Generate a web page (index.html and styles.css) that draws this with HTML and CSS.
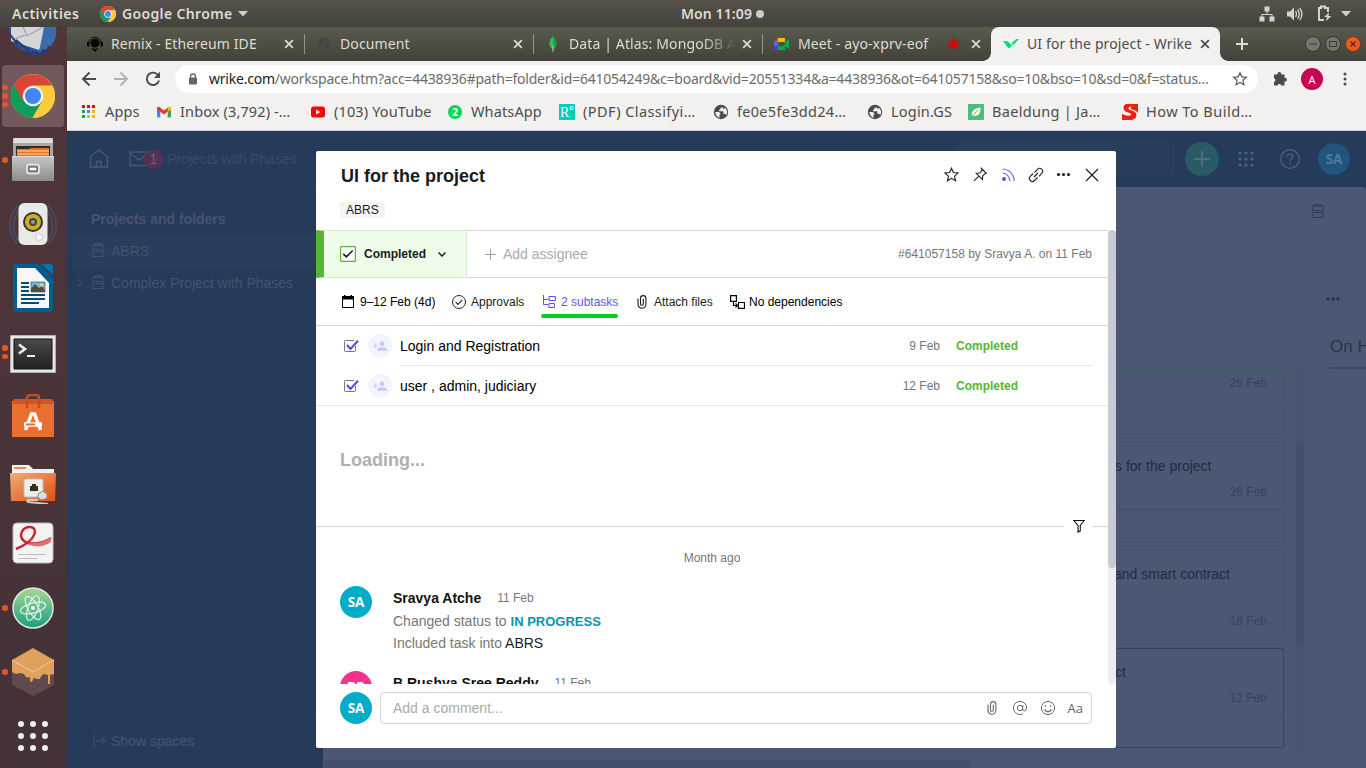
FILE: index.html
```html
<!DOCTYPE html>
<html lang="en">
<head>
<meta charset="utf-8">
<title>UI for the project - Wrike</title>
<link rel="stylesheet" href="styles.css">
</head>
<body>
<svg class="defs" width="0" height="0">
  <symbol id="chrome" viewBox="0 0 44 44">
    <circle cx="22" cy="22" r="22" fill="#fcca3f"/>
    <path d="M22 22 2.900 11A22 22 0 0 0 21.500 44L31.500 27.500z" fill="#109d58"/>
    <path d="M2.900 11A22 22 0 0 1 41 11.500H22L12.500 27.500z" fill="#db4437"/>
    <path d="M22 12h19.600A22 22 0 0 1 21.500 44L31 27z" fill="#fcca3f"/>
    <circle cx="22" cy="22" r="10.300" fill="#f1f1f1"/><circle cx="22" cy="22" r="8" fill="#4285f4"/>
  </symbol>
  <symbol id="close" viewBox="0 0 10 10"><path d="M1.800 1.800l6.400 6.400m0-6.400l-6.400 6.400" fill="none" stroke="currentColor" stroke-width="1.500"/></symbol>
  <symbol id="globe" viewBox="0 0 16 16"><circle cx="8" cy="8" r="7.200" fill="#4a4a4a"/><path d="M2.200 8h3.300q2 .3 2 2.500H6.500v3.200Q3 12.500 2.200 8zM9.500 2.300v1.500H7.300v2H6v1.500h4.300v2.500h1.700l1.300 1.200Q15.200 8 13 5l-1.500-1.700v1.400h-1.300z" fill="#f2f1f0"/></symbol>
  <symbol id="clipboard" viewBox="0 0 12 14"><path d="M3.500 1.500H1v12h10v-12H8.500M3.500.500h5v2h-5zM2.500 6.500h7M2.500 8.500h7" fill="none" stroke="currentColor"/></symbol>
  <symbol id="clip" viewBox="0 0 10 14"><path d="M1 3.500v5.800a3.900 3.900 0 0 0 7.900 0V3.300a2.700 2.700 0 0 0-5.400 0v5.600a1.400 1.400 0 0 0 2.800 0V3.700" fill="none" stroke="currentColor" stroke-width="1.100"/></symbol>
  <symbol id="check" viewBox="0 0 16 14"><path d="M12.500 7v4.700q0 .8-.8.800H2.300q-.8 0-.8-.8V2.300q0-.8.8-.8H11" fill="none" stroke="#777" /><path d="M4 6l3.500 3.900L15 1.800" fill="none" stroke="#5a4ff3" stroke-width="2.200"/></symbol>
  <symbol id="person" viewBox="0 0 24 24"><circle cx="12" cy="12" r="12" fill="#f2f4ff"/><g fill="#c3c8fa"><circle cx="14" cy="9.700" r="2.300"/><path d="M9 16.700q0-3.500 5-3.500t5 3.500zM5 11.200h2v-2h1v2h2v1H8v2H7v-2H5z"/></g></symbol>
</svg>

<div class="desktop">
  <header class="topbar">
    <span class="activities">Activities</span>
    <svg class="mini-chrome" width="16" height="16"><use href="#chrome"/></svg>
    <span class="appname">Google Chrome</span>
    <svg width="10" height="6"><path d="M0 0h10L5 5.500z" fill="#d2d0ca"/></svg>
    <div class="clock"><span>Mon 11:09</span><i></i></div>
    <div class="tray">
      <svg width="16" height="16" fill="#d5d3ce"><path d="M5.500 0.500h5v5h-5zM0.500 10.500h5v5h-5zM10.500 10.500h5v5h-5zM7.500 5h1v3h5v3h-1V9h-9v2h-1V8h5z"/></svg>
      <svg width="17" height="16"><path d="M1 5.500h3l4-4v13l-4-4H1z" fill="#d5d3ce"/><path d="M9.500 5.200q2 2.800 0 5.600M11.600 3.300q3.300 4.700 0 9.400M13.700 1.800q4.400 6.200 0 12.400" fill="none" stroke="#d5d3ce" stroke-width="1.300"/></svg>
      <svg width="16" height="17"><path d="M8 15H3V3h2V1.500h4V3h3v4" fill="none" stroke="#d5d3ce" stroke-width="2"/><path d="M13 7.500 8 12h3l-1 4 5.500-5h-3z" fill="#d5d3ce"/></svg>
      <svg width="10" height="6"><path d="M0 0h10L5 5.500z" fill="#d2d0ca"/></svg>
    </div>
  </header>

  <div class="below">
    <aside class="dock">
      <div class="dock-item first">
        <svg width="50" height="30"><path d="M0 0h48q2 16-12 25l-10 3-8-3Q1 18 0 0z" fill="#2d4e90"/><path d="M33 0h15q2 14-9 22l-8 3z" fill="#3a6cac"/><path d="M3 0h33l-4 20-1 3L3 14z" fill="#d6d5d8"/><path d="M15 0l4 9L35 0M17 8L4 13" fill="none" stroke="#96949a"/><path d="M1 6l9 12-2-5 12 10 1 5 4-3 8 3 2-5 4 1 2-5" fill="none" stroke="#233a78" stroke-width="2"/></svg>
      </div>
      <div class="dock-item active"><svg width="44" height="44"><use href="#chrome"/></svg><span class="pips"><i></i><i></i><i></i></span></div>
      <div class="dock-item">
        <svg width="42" height="44"><defs><linearGradient id="gm" x2="0" y2="1"><stop stop-color="#c6c6c4"/><stop offset="1" stop-color="#8c8c8a"/></linearGradient></defs><path d="M1 0h40v43H1z" fill="#a8a8a6"/><path d="M2 0h38l1 5H1z" fill="#dededc"/><path d="M4 8h34v11H4z" fill="#332b24"/><path d="M5 11h12l2-1h18v9H5z" fill="#e77425"/><path d="M5 13h32M5 16h32" stroke="#fbd9a4"/><path d="M0 18h42v25H0z" fill="url(#gm)"/><path d="M0 18.500h42" stroke="#ddd"/><rect x="15" y="26.500" width="12" height="9" rx="2" fill="#999" stroke="#e0e0e0" stroke-width="2"/><path d="M17 29h8v4h-8z" fill="#fff" stroke="#444"/></svg><span class="pips"><i></i></span>
      </div>
      <div class="dock-item">
        <svg width="50" height="46"><path d="M10 4Q-6 24 9 43M14 5Q-2 24 12 42M40 4Q56 24 41 43M36 5Q52 24 38 42" fill="none" stroke="#4a4a66" stroke-width="1.800"/><rect x="10.500" y="2" width="29" height="42" rx="6" fill="#e9e9e7"/><circle cx="25" cy="21" r="10" fill="#333"/><circle cx="25" cy="21" r="8" fill="#ceaf22"/><circle cx="25" cy="21" r="4" fill="#464642"/><circle cx="25" cy="21" r="2" fill="#999"/><circle cx="31" cy="36" r="3.500" fill="#f8f8f8" stroke="#ccc"/></svg>
      </div>
      <div class="dock-item">
        <svg width="42" height="50"><path d="M3 1h24l14 14v31q0 3-3 3H4q-3 0-3-3V4q0-3 2-3z" fill="#005d91"/><path d="M29 1h9q3 0 3 3v8z" fill="#0071ad"/><path d="M5 5h18l14 15v25H5z" fill="#f8f8f8"/><path d="M9 20h8M9 24h8M9 28h8M9 32h24M9 36h24M9 40h18" stroke="#004c7d" stroke-width="2"/><path d="M19 19h14v10H19z" fill="#75b8e6" stroke="#245" stroke-width=".6"/><path d="M19 29v-3l4-5 4 4 3-2 3 5v1z" fill="#554d3a"/><circle cx="29.500" cy="22" r="1.500" fill="#fde255"/></svg>
      </div>
      <div class="dock-item term">
        <svg width="46" height="38"><defs><linearGradient id="tm" x2="0" y2="1"><stop stop-color="#484b48"/><stop offset="1" stop-color="#222321"/></linearGradient></defs><path d="M.500.500h45v37H.500z" fill="#e6e6e5" stroke="#b0b0b0"/><path d="M4 4h38v30H4z" fill="url(#tm)" stroke="#111"/><path d="M9 9.500l6 4.500-6 4.500" fill="none" stroke="#eee" stroke-width="2.600"/><path d="M17 21h8" stroke="#eee" stroke-width="2"/></svg><span class="pips"><i></i><i></i></span>
      </div>
      <div class="dock-item">
        <svg width="42" height="44"><path d="M0 7h42v36H0z" fill="#e96f31"/><path d="M2 5h38l2 5H0z" fill="#cf5526"/><path d="M15 14V3l2-2h8l2 2v11" fill="none" stroke="#c44e22" stroke-width="2.500"/><path d="M13.500 36l6-16h3l6 16" fill="none" stroke="#fff" stroke-width="3.500"/><path d="M12 30.500h18" stroke="#fff" stroke-width="4.500"/><path d="M14 30.500h9" stroke="#e96f31" stroke-width="2"/></svg>
      </div>
      <div class="dock-item folder">
        <svg width="46" height="40"><defs><linearGradient id="fd" x2="1" y2="1"><stop stop-color="#efae73"/><stop offset="1" stop-color="#e04e18"/></linearGradient></defs><path d="M2 1h17l4 4h21v12H2z" fill="#f2efec"/><path d="M4 3h12v2H4z" fill="#e58c54"/><path d="M0 9h46l-1 28H1z" fill="url(#fd)"/><rect x="14" y="15" width="19" height="18" rx="2" fill="#ededeb" stroke="#bdbdbb"/><path d="M20 22h2v-2h4v2h2v5h-8z" fill="#32301d"/><path d="M28 30l5-3 4 3v4l-5 2-4-2z" fill="#ddd" stroke="#888"/><path d="M28 36q-14-1-10 2 10 1 20 2" fill="none" stroke="#ccc" stroke-width="2"/></svg>
      </div>
      <div class="dock-item docv">
        <svg width="42" height="42"><rect x="1" y="1" width="40" height="40" rx="4" fill="#f3f3f3" stroke="#bbb"/><path d="M4 27C26 18 26 5 18 5S6 14 12 19s20 2 27-3" fill="none" stroke="#c22b32" stroke-width="2.500"/><path d="M17 21q13 1 22-6v5q-10 7-22 3z" fill="#dd7275"/><path d="M6 32.500h28M6 36.500h19" stroke="#bcbcbc"/></svg>
      </div>
      <div class="dock-item">
        <svg width="42" height="42"><defs><linearGradient id="at" x2="0" y2="1"><stop stop-color="#a8d794"/><stop offset="1" stop-color="#18a080"/></linearGradient></defs><circle cx="21" cy="21" r="20" fill="url(#at)" stroke="#e2e8e2" stroke-width="1.500"/><g fill="none" stroke="#e5f3e7" stroke-width="1.200"><ellipse cx="21" cy="21" rx="13" ry="5" transform="rotate(-15 21 21)"/><ellipse cx="21" cy="21" rx="13" ry="5" transform="rotate(60 21 21)"/><ellipse cx="21" cy="21" rx="13" ry="5" transform="rotate(110 21 21)"/></g><circle cx="21" cy="21" r="2" fill="#fff"/></svg><span class="pips"><i></i></span>
      </div>
      <div class="dock-item">
        <svg width="42" height="48"><path d="M0 12v25l21 11 21-11V12z" fill="#614a4e"/><path d="M21 0l21 12v14l-4 1v9h-2v-9l-4-1q-3 1-4 5l-4 0q-1-2-3 0 0 3-3 3v-5q-4 2-6-3l-4-1-4 1-4-2V12z" fill="#dfa15c"/><path d="M0 12l21 12 21-12" fill="none" stroke="#f5ead7" stroke-dasharray="1.500 1"/></svg><span class="pips"><i></i></span>
      </div>
      <div class="dock-item apps"><i></i><i></i><i></i><i></i><i></i><i></i><i></i><i></i><i></i></div>
    </aside>

    <section class="browser">
      <div class="tabs">
        <div class="tab"><svg width="16" height="16"><circle cx="8" cy="7" r="4.600" fill="#080808"/><path d="M1.700 7.500a6.300 6.300 0 0 1 12.600 0" fill="none" stroke="#080808"/><path d="M0 6h2.500v4.500H1L0 9.500zM13.500 6H16v3.500l-1 1h-1.500zM4 12l4 1 4-1-4 4z" fill="#080808"/></svg><span class="tt t1">Remix - Ethereum IDE</span><svg class="x" width="12" height="12"><use href="#close"/></svg></div>
        <div class="tab"><svg width="16" height="16"><circle cx="8" cy="8" r="6.500" fill="#484a46"/><path d="M3 5l4-2 1 4-3 3zM9 6l4 2-3 5z" fill="#42443f"/></svg><span class="tt t2">Document</span><svg class="x" width="12" height="12"><use href="#close"/></svg></div>
        <div class="tab"><svg width="16" height="16"><path d="M8 0q7 8 0 14Q1 8 8 0z" fill="#13aa52"/><path d="M8 0q-7 8 0 14z" fill="#3bbb55"/><path d="M8 9v7" stroke="#a8c09a"/></svg><span class="tt t3 fade">Data | Atlas: MongoDB A</span><svg class="x" width="12" height="12"><use href="#close"/></svg></div>
        <div class="tab"><svg width="16" height="16"><path d="M0 6l4-4v4z" fill="#ea4335"/><path d="M4 2h7v4H4z" fill="#ffba00"/><path d="M0 6h4v4H0z" fill="#3077fc"/><path d="M0 10h4v4H1l-1-1z" fill="#5238e8"/><path d="M4 10h5l2-2V6l4-3v10l-4-3v4H4z" fill="#00ac47"/></svg><span class="tt t4">Meet - ayo-xprv-eof</span><svg class="rec" width="14" height="14"><circle cx="7" cy="7" r="3.800" fill="#e00000"/><circle cx="7" cy="7" r="5.600" fill="none" stroke="#c80000" stroke-dasharray="1.600 1"/></svg><svg class="x" width="12" height="12"><use href="#close"/></svg></div>
        <div class="tab on"><svg width="16" height="16"><path d="M0 5h3q1.500 0 2.500 1L9 9.500 6.500 12q-.8.600-1.600-.2zM8.500 7.500L12 4q1-1 2-1h2l-5 5.500q-1 .8-1.800 0z" fill="#00e070"/></svg><span class="tt t5">UI for the project - Wrike</span><svg class="x" width="12" height="12"><use href="#close"/></svg></div>
        <svg class="plus" width="14" height="14"><path d="M7 1v12M1 7h12" stroke="#dfdbd2" stroke-width="2"/></svg>
        <div class="win"><svg width="16" height="16"><circle cx="8" cy="8" r="7.500" fill="#77766e" stroke="#35352f"/><path d="M4 8h8" stroke="#3a3935"/></svg><svg width="16" height="16"><circle cx="8" cy="8" r="7.500" fill="#77766e" stroke="#35352f"/><path d="M4.500 5.500h7v5h-7z" fill="none" stroke="#3a3935"/></svg><svg width="16" height="16"><circle cx="8" cy="8" r="7.500" fill="#ed5a1f" stroke="#7a3217"/><path d="M5.500 5.500l5 5m0-5l-5 5" stroke="#51260f" stroke-width="1.200"/></svg></div>
      </div>
      <div class="toolbar">
        <div class="nav">
          <svg width="16" height="16"><path d="M15 8H2M8.500 1.500L2 8l6.500 6.500" fill="none" stroke="#4a4a48" stroke-width="1.900"/></svg>
          <svg width="16" height="16"><path d="M1 8h13M7.500 1.500L14 8l-6.500 6.500" fill="none" stroke="#b1b0ae" stroke-width="1.900"/></svg>
          <svg width="16" height="16"><path d="M13.300 4.500A6.200 6.200 0 1 0 14 9.500" fill="none" stroke="#4a4a48" stroke-width="1.900"/><path d="M15 .800V7H9z" fill="#4a4a48"/></svg>
        </div>
        <div class="omni">
          <svg width="10" height="12"><path d="M1.500 5h7v6h-7z" fill="#666" stroke="#666"/><path d="M2.500 5V3.500a2.500 2.500 0 0 1 5 0V5" fill="none" stroke="#666" stroke-width="1.300"/></svg>
          <span class="url"><b>wrike.com</b>/workspace.htm?acc=4438936#path=folder&amp;id=641054249&amp;c=board&amp;vid=20551334&amp;a=4438936&amp;ot=641057158&amp;so=10&amp;bso=10&amp;sd=0&amp;f=status…</span>
          <svg width="16" height="16"><path d="M8 1.800l1.900 4 4.400.500-3.300 3 .900 4.400L8 11.500l-3.900 2.200.9-4.400-3.300-3 4.400-.5z" fill="none" stroke="#5d5d5b" stroke-width="1.300"/></svg>
        </div>
        <svg class="puzzle" width="16" height="16"><path d="M2 3.500h3.600a1.900 1.900 0 1 1 3.600 0H12.500v3.300a1.900 1.900 0 1 1 0 3.700V14.500H9.200a1.900 1.900 0 0 0-3.700 0H2v-3.600a1.900 1.900 0 0 0 0-3.700z" fill="#4a4a48"/></svg>
        <span class="me">A</span>
        <svg class="kebab" width="4" height="14"><g fill="#4a4a48"><circle cx="2" cy="2" r="1.500"/><circle cx="2" cy="7" r="1.500"/><circle cx="2" cy="12" r="1.500"/></g></svg>
      </div>
      <div class="marks">
        <div class="mk w1"><svg width="16" height="16"><path d="M1 1h3v3H1zM6 1h3v3H6zM11 1h3v3h-3z" fill="#e00d0d"/><path d="M1 6h3v3H1zM1 11h3v3H1z" fill="#17a05d"/><path d="M6 6h3v3H6z" fill="#4285f4"/><path d="M11 6h3v3h-3zM6 11h3v3H6zM11 11h3v3h-3z" fill="#f7b50a"/></svg><span>Apps</span></div>
        <div class="mk w2"><svg width="16" height="16"><path d="M1 4h3.300v9.500H2l-1-1z" fill="#4285f4"/><path d="M11.700 4H15v8.500l-1 1h-2.300z" fill="#34a853"/><path d="M1 4.500Q1 2 3.500 3L8 6.500 12.500 3v4L8 10.500 1 5.500z" fill="#e43a30"/><path d="M11.700 3.500Q15 1.500 15 4.500v1l-3.300 2.500z" fill="#fbbc04"/></svg><span>Inbox (3,792) -…</span></div>
        <div class="mk w3"><svg width="16" height="16"><rect x="1" y="2.500" width="14" height="11" rx="2.500" fill="#f00"/><path d="M6 5.500v5L10.500 8z" fill="#fff"/></svg><span>(103) YouTube</span></div>
        <div class="mk w4"><span class="wa">2</span><span>WhatsApp</span></div>
        <div class="mk w5"><span class="rg">R<sup>G</sup></span><span>(PDF) Classifyi…</span></div>
        <div class="mk w6"><svg width="16" height="16"><use href="#globe"/></svg><span>fe0e5fe3dd24…</span></div>
        <div class="mk w7"><svg width="16" height="16"><use href="#globe"/></svg><span>Login.GS</span></div>
        <div class="mk w8"><svg width="16" height="16"><path d="M0 0h16v16H0z" fill="#4cbf74"/><path d="M4 12Q2.500 4.500 12.500 3.500 13 12 6 12z" fill="#fff"/><path d="M3.500 13L10 6" stroke="#4cbf74"/></svg><span>Baeldung | Ja…</span></div>
        <div class="mk w9"><svg width="16" height="16"><path d="M0 0h16v16H0z" fill="#fff"/><path d="M4 0h12v4Q10 1.500 8.500 3.500q-.5 1.500 3 2.500 4.500 1.500 4.500 4V0H4Q1 1.500 1.500 4.500 2 7.500 6 8.500q4 1 3 2.500Q7 13 0 10v6h10q5-1.500 4.500-5.500Q14 7.500 10 6.500 6 5.500 6.500 4 7 1.500 16 4V0z" fill="#ee2211"/></svg><span>How To Build…</span></div>
      </div>

      <main class="page">
        <div class="app-head">
          <svg class="home" width="20" height="20"><path d="M1.500 18V7.500L10 1l8.500 6.500V18zM7.500 18v-5.500h4.500V18" fill="none" stroke="currentColor" stroke-width="1.400"/></svg>
          <svg width="20" height="16"><path d="M1 1h18v13.500H1zM1 2l9 7 9-7" fill="none" stroke="currentColor" stroke-width="1.400"/></svg>
          <span class="count">1</span>
          <span class="crumb">Projects with Phases</span>
          <svg class="crumb-next" width="6" height="10"><path d="M1 1l4 4-4 4" fill="none" stroke="currentColor"/></svg>
          <div class="search"></div>
          <span class="add"><svg width="16" height="16"><path d="M8 0v16M0 8h16" stroke="#506a80" stroke-width="2"/></svg></span>
          <span class="ring"><svg width="16" height="16" fill="#506080"><circle cx="2" cy="2" r="1.600"/><circle cx="8" cy="2" r="1.600"/><circle cx="14" cy="2" r="1.600"/><circle cx="2" cy="8" r="1.600"/><circle cx="8" cy="8" r="1.600"/><circle cx="14" cy="8" r="1.600"/><circle cx="2" cy="14" r="1.600"/><circle cx="8" cy="14" r="1.600"/><circle cx="14" cy="14" r="1.600"/></svg></span>
          <span class="ring"><svg width="20" height="20" fill="none" stroke="#506080" stroke-width="1.300"><circle cx="10" cy="10" r="9.300"/><path d="M7.300 7.800q0-2.700 2.700-2.700t2.700 2.500c0 2-2.700 1.900-2.700 4.400M10 13.500v1.700"/></svg></span>
          <span class="user-dim">SA</span>
        </div>
        <div class="app-body">
          <nav class="side">
            <h2>Projects and folders</h2>
            <div class="node sel"><span class="chev"></span><svg width="12" height="14"><use href="#clipboard"/></svg><span>ABRS</span></div>
            <div class="node"><svg class="chev" width="6" height="10"><path d="M1 1l4 4-4 4" fill="none" stroke="currentColor"/></svg><svg width="12" height="14"><use href="#clipboard"/></svg><span>Complex Project with Phases</span></div>
            <div class="show"><svg width="13" height="12"><path d="M1 0v12M3 6h9M8.500 2.500L12 6 8.500 9.500" fill="none" stroke="currentColor"/></svg><span>Show spaces</span></div>
          </nav>
          <div class="work">
            <div class="work-top"><svg width="12" height="14"><use href="#clipboard"/></svg></div>
            <div class="filter"><svg width="14" height="4" fill="#273450"><circle cx="2" cy="2" r="1.700"/><circle cx="7" cy="2" r="1.700"/><circle cx="12" cy="2" r="1.700"/></svg></div>
            <div class="board">
              <div class="col done">
                <div class="col-title"></div>
                <div class="cards">
                  <div class="card c1"><time>26 Feb</time></div>
                  <div class="card c2"><p>s for the project</p><time>26 Feb</time></div>
                  <div class="card c3"><p>and smart contract</p><time>16 Feb</time></div>
                  <div class="card c4"><p>ct</p><time>12 Feb</time></div>
                </div>
              </div>
              <div class="vtrack"><div class="vthumb"></div></div>
              <div class="col hold"><div class="col-title">On Hold</div></div>
            </div>
            <div class="hbar"><div></div></div>
          </div>
        </div>

        <article class="modal">
          <div class="m-head">
            <div class="m-line"><h1>UI for the project</h1>
              <div class="acts">
                <svg width="16" height="16"><path d="M7.500 1.200l1.900 4.300 4.700.5-3.500 3.200 1 4.600-4.100-2.400-4.100 2.400 1-4.600L.900 6l4.700-.5z" fill="none" stroke="#222" stroke-width="1.100"/></svg>
                <svg width="16" height="16"><path d="M9.500 1.500l4.800 4.800-1.300.4-2.300 2.300-.3 3.500L4.200 6.300l3.500-.3 2.300-2.300zM6.500 9.300L2 13.800" fill="none" stroke="#222" stroke-width="1.100"/></svg>
                <svg width="16" height="16"><circle cx="4" cy="12" r="2" fill="#5a4ff3"/><path d="M2.500 6A8 8 0 0 1 9.800 14M2.500 2A11.500 11.500 0 0 1 14 14" fill="none" stroke="#746aff" stroke-width="1.200"/></svg>
                <svg width="16" height="16"><path d="M6 10l4-4M6.500 5.500l3-3.200a2.800 2.800 0 0 1 4.200 4L11 9.300M5 6.500L2.300 9.300a2.800 2.800 0 0 0 4.200 4.200l3-3" fill="none" stroke="#222" stroke-width="1.100"/></svg>
                <svg width="16" height="16" fill="#222"><circle cx="2.500" cy="7.500" r="1.600"/><circle cx="7.500" cy="7.500" r="1.600"/><circle cx="12.500" cy="7.500" r="1.600"/></svg>
                <svg width="16" height="16"><path d="M2 2l12 12m0-12L2 14" stroke="#222" stroke-width="1.300"/></svg>
              </div>
            </div>
            <span class="tag">ABRS</span>
          </div>
          <div class="m-scroll">
            <div class="m-body">
              <div class="status">
                <div class="state"><svg width="16" height="16"><rect x=".6" y=".6" width="14.800" height="14.800" rx="1" fill="#fff" stroke="#57b535" stroke-width="1.200"/><path d="M3.300 7.800l3 3L12.700 4.500" fill="none" stroke="#222" stroke-width="1.700"/></svg><b>Completed</b><svg width="8" height="5"><path d="M.5.500L4 4 7.500.500" fill="none" stroke="#222" stroke-width="1.500"/></svg></div>
                <svg class="aplus" width="11" height="11"><path d="M5.500 0v11M0 5.500h11" stroke="#a0a0a0"/></svg><span class="assign">Add assignee</span>
                <span class="ident">#641057158 by Sravya A. on 11 Feb</span>
              </div>
              <div class="tools">
                <span class="tool d1"><svg width="12" height="13"><path d="M.5 3h11v9.500H.5z" fill="none" stroke="#000"/><path d="M0 1h12v3.500H0zM2 0h1.500v2H2zM8.500 0H10v2H8.500z"/></svg>9–12 Feb (4d)</span>
                <span class="tool d2"><svg width="14" height="14"><circle cx="7" cy="7" r="6.500" fill="none" stroke="#222"/><path d="M3.700 7.200l2.200 2.200 4.400-4.500" fill="none" stroke="#222" stroke-width="1.100"/></svg>Approvals</span>
                <span class="tool d3"><svg width="13" height="13"><path d="M.5 0v9.500h5M.5 4.500h5M6 1.500h6.500v4H6zM6 8.500h5.500v4H6z" fill="none" stroke="#5a4ff3"/></svg>2 subtasks</span>
                <span class="tool d4"><svg width="10" height="14"><use href="#clip"/></svg>Attach files</span>
                <span class="tool d5"><svg width="15" height="14"><path d="M.6.600h5.800v5.800H.600zM8.500 7.500h6v5.800h-6zM3.500 6.500V10.500h4M5.500 8.500l2 2-2 2" fill="none" stroke="#000" stroke-width="1.200"/></svg>No dependencies</span>
              </div>
              <div class="sub"><svg width="16" height="14"><use href="#check"/></svg><svg class="pp" width="24" height="24"><use href="#person"/></svg><div class="sub-row"><span>Login and Registration</span><time>9 Feb</time><b>Completed</b></div></div>
              <div class="sub last"><svg width="16" height="14"><use href="#check"/></svg><svg class="pp" width="24" height="24"><use href="#person"/></svg><div class="sub-row"><span>user , admin, judiciary</span><time>12 Feb</time><b>Completed</b></div></div>
              <div class="loading">Loading...</div>
              <div class="divide"><i></i><svg width="12" height="14"><path d="M.8 1.500h10.400L7.300 6.500v5.300L5 13V6.500z" fill="none" stroke="#111" stroke-width="1.100"/></svg><i class="tail"></i></div>
              <div class="ago">Month ago</div>
              <div class="event"><span class="av">SA</span><div><div class="who"><b>Sravya Atche</b><time>11 Feb</time></div><p>Changed status to <strong>IN PROGRESS</strong></p><p>Included task into <em>ABRS</em></p></div></div>
              <div class="event"><span class="av pink">BR</span><div class="who"><b>B Rushya Sree Reddy</b><time>11 Feb</time></div></div>
            </div>
            <div class="m-track"><div></div></div>
          </div>
          <div class="m-foot"><span class="av">SA</span>
            <div class="comment"><span>Add a comment...</span>
              <svg class="attach" width="10" height="14"><use href="#clip"/></svg>
              <svg width="16" height="16" fill="none" stroke="#666"><circle cx="8" cy="8" r="2.700"/><path d="M10.700 5v4q0 2 1.700 2t2.200-3A6.600 6.600 0 1 0 11 13.800"/></svg>
              <svg width="16" height="16" fill="none" stroke="#666"><circle cx="8" cy="8" r="6.600"/><path d="M4.700 9.200a3.400 3.400 0 0 0 6.600 0M5.500 5.200v1.500M10.500 5.200v1.500" stroke-width="1.200"/></svg>
              <span class="aa">Aa</span>
            </div>
          </div>
        </article>
      </main>
    </section>
  </div>
</div>
</body>
</html>
```

FILE: styles.css
```css
* { box-sizing: border-box; }
body { margin: 0; font-family: "Liberation Sans", Arial, sans-serif; font-size: 14px; }
h1, h2, p { margin: 0; }
svg { flex: none; display: block; }
.defs { position: absolute; }
.desktop { width: 1366px; height: 768px; display: flex; flex-direction: column; overflow: hidden; }

/* System bar */
.topbar { height: 27px; flex: none; display: flex; align-items: center; position: relative; padding: 0 15px 0 12px; background: linear-gradient(#56524b, #43423d); color: #dfdbd2; font: 600 14px "Noto Sans", sans-serif; }
.topbar span { padding-bottom: 1px; }
.activities { width: 88px; letter-spacing: .5px; }
.mini-chrome { margin-right: 6px; }
.appname { width: 116px; white-space: nowrap; letter-spacing: .35px; }
.clock { position: absolute; left: 681px; display: flex; align-items: center; gap: 4px; white-space: nowrap; letter-spacing: .1px; }
.clock i { width: 8px; height: 8px; border-radius: 50%; background: #cdcbc6; }
.tray { margin-left: auto; display: flex; align-items: center; gap: 11px; }
.tray svg:nth-child(3) { margin-left: 2px; margin-right: -2px; }

.below { display: flex; flex: 1; min-height: 0; }

/* Dock */
.dock { width: 67px; flex: none; padding-right: 1px; background: linear-gradient(#503537, #4a343a 50%, #433237); display: flex; flex-direction: column; overflow: hidden; }
.dock-item { height: 64px; flex: none; position: relative; display: flex; align-items: center; justify-content: center; }
.dock-item.first { height: 37px; align-items: flex-start; overflow: hidden; }
.dock-item.active { background: #73595b; border-radius: 4px; margin: 1px 2px; height: 62px; }
.term { padding-top: 3px; }
.folder { padding-top: 7px; }
.docv { padding-bottom: 2px; }
.pips { position: absolute; left: 2px; top: 0; bottom: 0; display: flex; flex-direction: column; justify-content: center; gap: 3px; }
.active .pips { left: 0; }
.pips i { width: 5.500px; height: 5.500px; border-radius: 50%; background: #e95420; }
.apps { display: grid; grid-template-columns: repeat(3, 6px); gap: 6px; align-content: center; }
.apps i { width: 6px; height: 6px; border-radius: 50%; background: #eee; }

/* Browser chrome */
.browser { flex: 1; min-width: 0; display: flex; flex-direction: column; font-family: "Noto Sans", sans-serif; background: #f2f1f0; }
.tabs { height: 34px; flex: none; display: flex; align-items: center; padding-left: 8px; background: linear-gradient(#595b4d, #42423a); color: #dfdbd2; }
.tab { width: 229px; height: 34px; flex: none; display: flex; align-items: center; padding: 0 9px 0 12px; gap: 8px; position: relative; }
.tab:nth-child(-n+3)::after { content: ""; position: absolute; right: -1px; top: 7px; width: 1px; height: 20px; background: #96948a; }
.tt { flex: 1; min-width: 0; white-space: nowrap; overflow: hidden; font-size: 14px; padding-bottom: 1px; letter-spacing: .12px; }
.fade { -webkit-mask-image: linear-gradient(90deg, #000 80%, transparent); mask-image: linear-gradient(90deg, #000 80%, transparent); }
.tab .x { margin-left: -3px; }
.rec { margin-right: 4px; margin-left: -8px; }
.on { background: #f2f1f0; color: #4c4c4a; border-radius: 8px 8px 0 0; }
.on::before, .on::after { content: ""; position: absolute; bottom: 0; width: 8px; height: 8px; }
.on::before { left: -8px; background: radial-gradient(circle at 0 0, transparent 7.500px, #f2f1f0 8px); }
.on::after { right: -8px; background: radial-gradient(circle at 100% 0, transparent 7.500px, #f2f1f0 8px); }
.plus { margin-left: 15px; }
.win { display: flex; gap: 4px; margin-left: auto; padding-right: 5px; }
.toolbar { height: 36px; flex: none; display: flex; align-items: center; padding-left: 14px; }
.nav { display: flex; gap: 16px; width: 94px; }
.omni { width: 1083px; height: 28px; border-radius: 14px; background: #fff; display: flex; align-items: center; padding: 0 10px 0 13px; gap: 11px; }
.url { flex: 1; min-width: 0; white-space: nowrap; font-size: 14px; color: #6c6c6a; letter-spacing: -.225px; padding-bottom: 1px; }
.url b { font-weight: 400; color: #222; }
.puzzle { margin-left: 14px; }
.me { width: 22px; height: 22px; border-radius: 50%; background: #c70050; color: #fff; font-size: 11px; display: flex; align-items: center; justify-content: center; margin-left: 13px; }
.kebab { margin-left: 20px; }
.marks { height: 34px; flex: none; display: flex; padding: 0 0 4px 14px; border-bottom: 1px solid #cfcecb; color: #4c4c4a; }
.mk { display: flex; align-items: center; gap: 8px; flex: none; white-space: nowrap; font-size: 14.500px; letter-spacing: .13px; }
.mk > span:last-child { padding-bottom: 2px; }
.w1 { width: 75px; } .w2 { width: 154px; } .w3 { width: 137px; } .w4 { width: 112px; } .w5 { width: 154px; letter-spacing: .42px; }
.w6 { width: 154px; letter-spacing: .3px; } .w7 { width: 101px; letter-spacing: .2px; } .w8 { width: 154px; letter-spacing: .3px; } .w9 { width: 154px; letter-spacing: .48px; }
.wa { width: 14px; height: 14px; margin: 0 1px; border-radius: 50%; background: #00d757; color: #fff; font-size: 10px; font-weight: 700; line-height: 14px; text-align: center; letter-spacing: 0; }
.rg { width: 16px; height: 16px; background: #00ccbb; color: #fff; font: 14px/17px "Liberation Serif", serif; padding-left: 1px; border-radius: 1px; display: flex; letter-spacing: 0; }
.rg sup { font: 700 6px/8px "Liberation Sans", sans-serif; }

/* Dimmed workspace */
.page { flex: 1; min-height: 0; position: relative; display: flex; flex-direction: column; background: #263b5a; font-family: "Liberation Sans", Arial, sans-serif; color: #46536f; overflow: hidden; }
.app-head { height: 56px; flex: none; display: flex; align-items: center; padding: 0 16px 0 22px; color: #4a5675; }
.home { margin-right: 20px; }
.count { width: 19px; height: 19px; margin-left: -5px; border-radius: 50%; background: #553154; color: #68607c; line-height: 19px; text-align: center; z-index: 1; }
.crumb { margin-left: 4px; color: #3b4a69; }
.crumb-next { margin-left: 11px; color: #324463; }
.search { width: 220px; height: 34px; margin-left: auto; border-radius: 4px; background: #293e5d; }
.add { width: 34px; height: 34px; margin-left: 10px; border-radius: 50%; background: #285b66; display: flex; align-items: center; justify-content: center; }
.ring { width: 34px; height: 34px; margin-left: 10px; border-radius: 50%; border: 1px solid #2a3e5e; display: flex; align-items: center; justify-content: center; }
.user-dim { width: 32px; height: 32px; margin-left: 11px; border-radius: 50%; background: #22557c; color: #5179a0; font: 700 13.500px/32px "Open Sans", sans-serif; text-align: center; }
.app-body { flex: 1; min-height: 0; display: flex; }
.side { width: 256px; flex: none; display: flex; flex-direction: column; border-top: 1px solid #2a3e5c; margin-top: -1px; }
.side h2 { font-size: 14px; line-height: 32px; padding: 16px 0 0 24px; }
.node { height: 32px; display: flex; align-items: center; padding-left: 10px; }
.node.sel { background: #293e5d; margin-left: 5px; padding-left: 5px; }
.node svg:nth-child(2) { margin-bottom: 2px; }
.node .chev { width: 6px; margin-right: 9px; }
.node span:last-child { margin-left: 7px; }
.show { margin-top: auto; height: 56px; border-top: 1px solid #2a3e5c; display: flex; align-items: center; gap: 5px; padding: 0 0 0 26px; }
.work { flex: 1; min-width: 0; background: #4b5874; border-radius: 0 4px 0 0; display: flex; flex-direction: column; overflow: hidden; }
.work-top { height: 91px; flex: none; display: flex; justify-content: flex-end; padding: 17px 42px 0 0; color: #2c3854; }
.filter { height: 41px; flex: none; border: solid #47546f; border-width: 1px 0; background: #4a5773; display: flex; justify-content: flex-end; align-items: center; padding-right: 26px; }
.board { flex: 1; min-height: 0; display: flex; padding-left: 661px; }
.col { display: flex; flex-direction: column; flex: none; }
.done { width: 300px; }
.hold { width: 260px; margin-left: 26px; }
.col-title { height: 50px; font-size: 17px; line-height: 20px; padding-top: 18px; color: #27334f; border-bottom: 2px solid #3b4765; white-space: nowrap; }
.done .col-title { border-color: #36625d; }
.cards { display: flex; flex-direction: column; }
.card { border: 1px solid #475470; border-radius: 2px; display: flex; flex-direction: column; justify-content: space-between; padding: 10px 16px 8px 130px; margin-bottom: 7px; font-size: 14px; color: #202c48; line-height: 16px; white-space: nowrap; }
.card time { font-size: 12px; color: #36425f; text-align: right; }
.card::after { content: ""; border-top: 1px solid #465370; margin: 0 -16px 0 -130px; }
.c1 { height: 66px; border-top: 0; padding-top: 6px; }
.c1::after { margin-bottom: 24px; }
.c2 { height: 101px; padding-top: 15px; }
.c2::after { margin-bottom: 24px; }
.c3 { height: 91px; padding: 15px 16px 11px 129px; }
.c3::after { display: none; }
.c4 { height: 100px; padding-top: 15px; border-color: #37435f; }
.c4::after { margin-bottom: 23px; }
.vtrack { width: 8px; height: 383px; margin: 50px 0 0 12px; background: #485570; border-radius: 4px; padding-top: 73px; flex: none; }
.vthumb { height: 205px; border-radius: 4px; background: #434f6b; }
.hbar { height: 8px; flex: none; }
.hbar div { width: 648px; height: 8px; background: #434f6b; border-radius: 4px; }

/* Task window */
.modal { position: absolute; left: 249px; top: 20px; width: 800px; height: 597px; background: #fff; border-radius: 2px; display: flex; flex-direction: column; color: #1b1b1b; overflow: hidden; }
.m-head { height: 79px; flex: none; padding: 14px 16px 0 24px; }
.m-line { display: flex; justify-content: space-between; height: 36px; }
h1 { font-size: 18px; line-height: 22px; padding-left: 1px; }
.acts { display: flex; gap: 12px; padding-top: 2px; }
.tag { display: inline-block; background: #f4f4f4; border-radius: 2px; font-size: 12px; line-height: 16px; padding: 0 6px; vertical-align: top; margin-top: 1px; }
.m-scroll { height: 454px; flex: none; display: flex; overflow: hidden; }
.m-body { width: 792px; display: flex; flex-direction: column; }
.m-body > * { flex: none; }
.m-track { width: 8px; background: #eceef0; border-radius: 4px; }
.m-track div { height: 338px; background: #c8cbd5; border-radius: 4px; }
.status { height: 48px; display: flex; align-items: center; border: solid #d4d4d4; border-width: 1px 0; }
.state { width: 151px; height: 48px; flex: none; border: 1px solid #d6eccb; border-left: 8px solid #57b535; background: #eefbe9; display: flex; align-items: center; padding-left: 16px; font-size: 12px; }
.state b { margin: 0 12px 0 8px; }
.aplus { margin: 0 7px 0 18px; }
.assign { color: #aaa; }
.ident { margin-left: auto; padding-right: 16px; font-size: 12px; color: #777; }
.tools { height: 48px; border-bottom: 1px solid #d4d4d4; display: flex; padding-left: 24px; font-size: 12px; }
.tool { height: 40px; display: flex; align-items: center; padding-top: 8px; white-space: nowrap; flex: none; }
.tool svg { margin-bottom: 1px; }
.d1 { color: #000; width: 112px; padding-left: 2px; gap: 6px; }
.d2 { width: 89px; gap: 5px; }
.d3 { width: 77px; padding-left: 2px; gap: 5px; color: #6056f3; margin-right: 19px; position: relative; }
.d3::after { content: ""; position: absolute; left: 0; right: 0; bottom: 0; height: 4px; border-radius: 2px; background: #00d21b; }
.d4 { width: 93px; gap: 7px; }
.d5 { color: #000; gap: 4px; }
.sub { height: 40px; display: flex; align-items: center; padding-left: 27px; }
.sub .pp { margin: 0 8px 0 9px; }
.sub-row { width: 692px; height: 40px; border-bottom: 1px solid #e5e5e5; display: flex; align-items: center; color: #000; }
.sub-row span { flex: 1; }
.sub-row time { font-size: 12px; color: #777; }
.sub-row b { font-size: 12px; color: #57b535; width: 62px; margin: 0 74px 0 16px; }
.last { border-bottom: 1px solid #e5e5e5; }
.last .sub-row { border: 0; }
.loading { height: 112px; padding: 43px 24px 0; font-size: 18px; line-height: 22px; font-weight: 700; color: #b0b0b0; }
.divide { display: flex; align-items: center; height: 16px; }
.divide i { flex: 1; height: 1px; background: #d4d4d4; }
.divide svg { margin: 0 7px 0 9px; }
.divide .tail { flex: none; width: 16px; }
.ago { text-align: center; color: #777; font-size: 12px; line-height: 16px; margin-top: 16px; }
.event { display: flex; padding: 20px 0 0 24px; height: 85px; color: #777; }
.event > div { margin-left: 21px; }
.event p { line-height: 22px; height: 22px; }
.event strong { font-size: 13px; color: #0097ab; }
.event em { font-style: normal; color: #1b1b1b; }
.who { display: flex; align-items: center; height: 24px; gap: 16px; }
.who b { color: #111; }
.who time { font-size: 12px; }
.av { width: 32px; height: 32px; flex: none; border-radius: 50%; background: #00acc7; color: #fff; font: 700 13.500px/32px "Open Sans", sans-serif; text-align: center; }
.pink { background: #f7328c; }
.m-foot { display: flex; padding: 8px 24px 0; gap: 8px; }
.comment { width: 712px; height: 32px; border: 1px solid #d1d1d1; border-radius: 4px; display: flex; align-items: center; padding: 0 8px 0 12px; gap: 12px; color: #666; }
.comment span:first-child { flex: 1; color: #aaa; }
.comment .attach { margin-right: 3px; }
.comment .aa { font: 13px "Open Sans", sans-serif; }
```
